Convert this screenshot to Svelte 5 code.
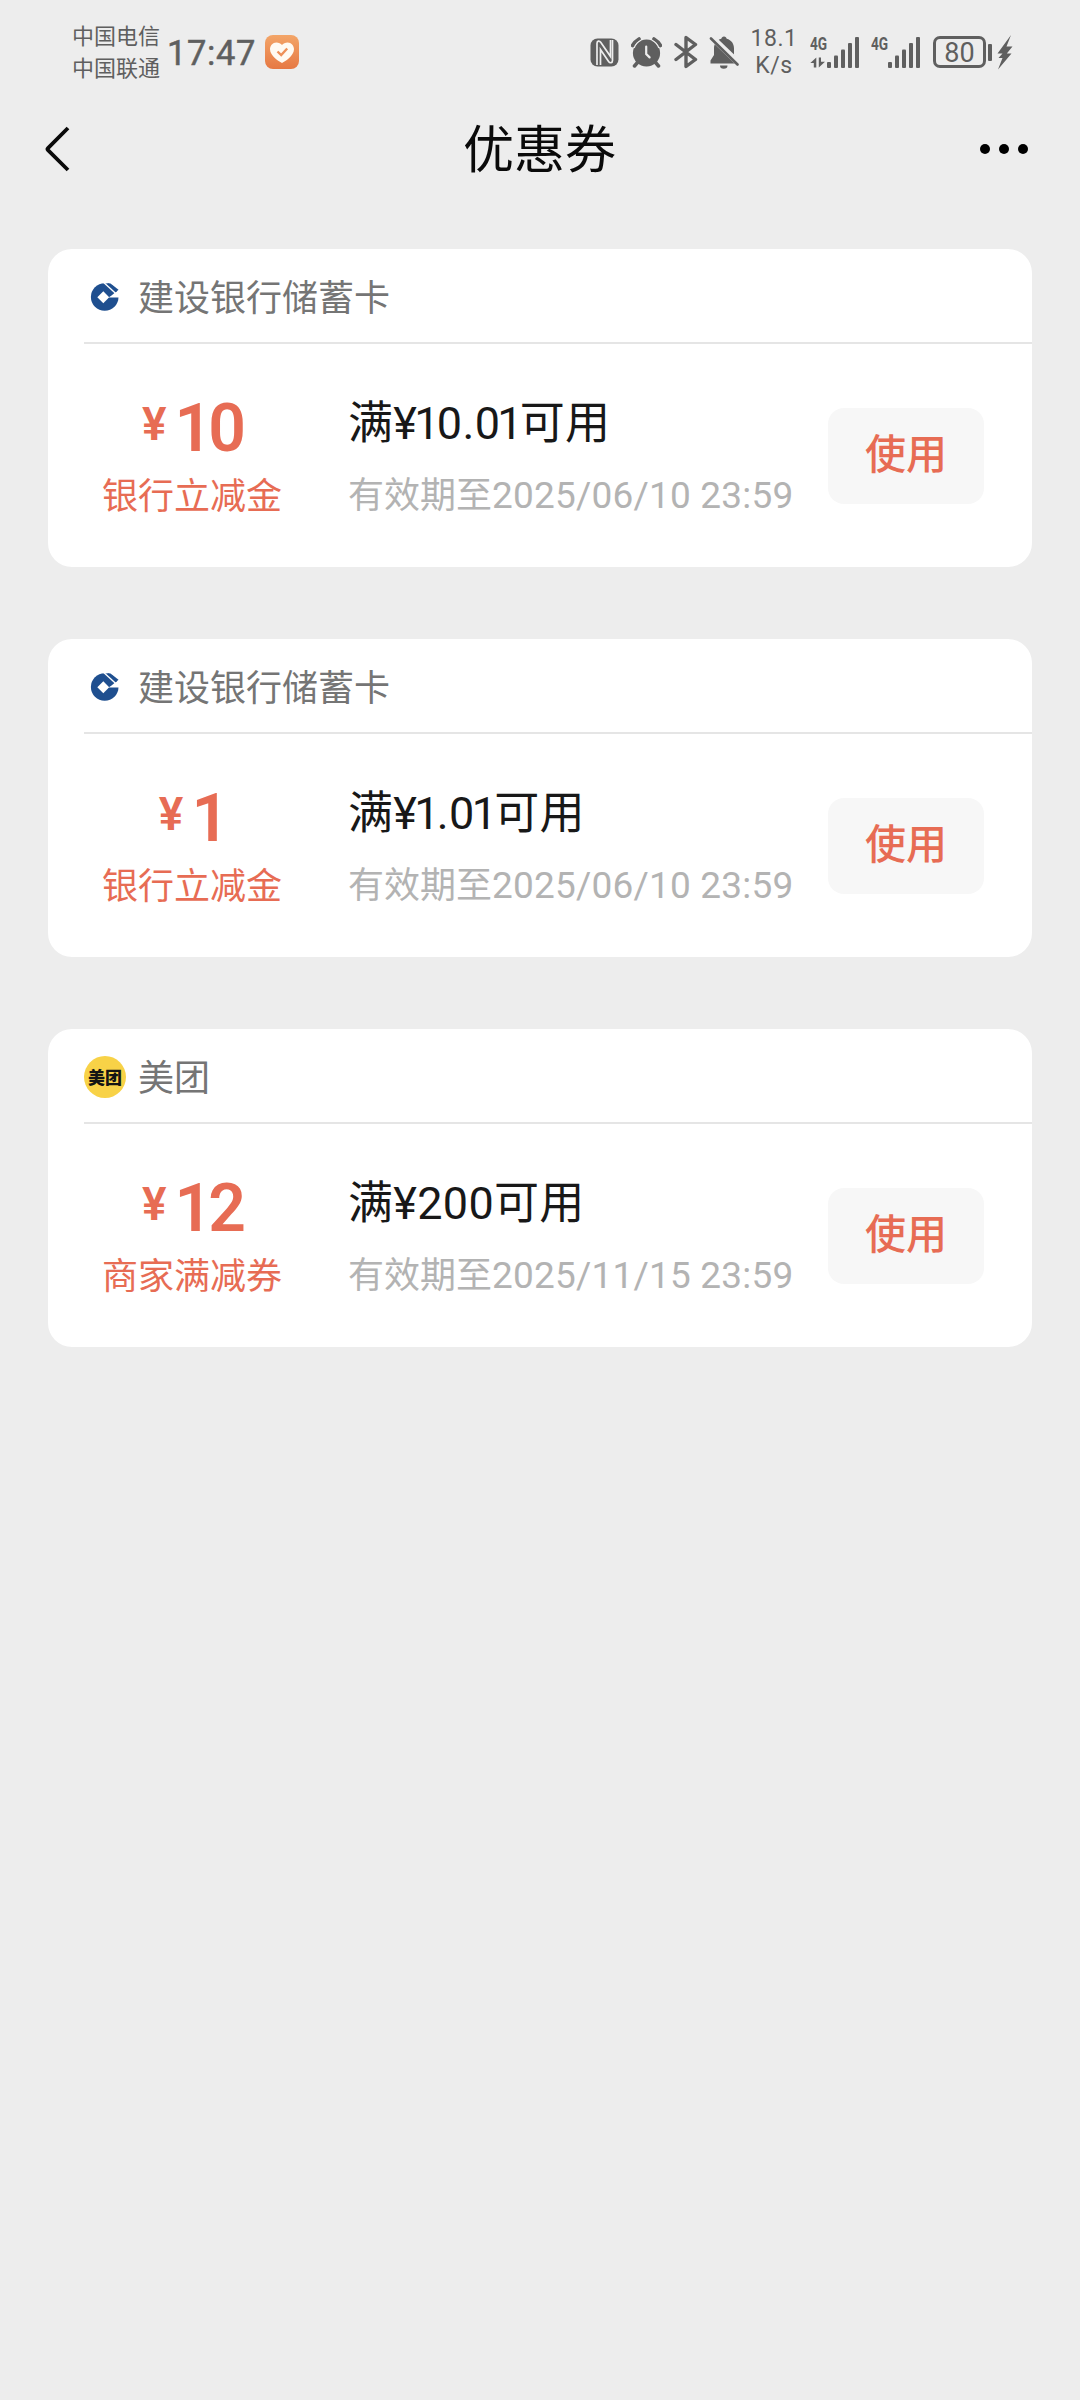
<script lang="ts">
	type Coupon = {
		logo: 'ccb' | 'meituan';
		issuer: string;
		amount: string;
		kind: string;
		limit: string;
		expires: string;
	};

	const coupons: Coupon[] = [
		{ logo: 'ccb', issuer: '建设银行储蓄卡', amount: '10', kind: '银行立减金', limit: '10.01', expires: '2025/06/10 23:59' },
		{ logo: 'ccb', issuer: '建设银行储蓄卡', amount: '1', kind: '银行立减金', limit: '1.01', expires: '2025/06/10 23:59' },
		{ logo: 'meituan', issuer: '美团', amount: '12', kind: '商家满减券', limit: '200', expires: '2025/11/15 23:59' }
	];
</script>

{#snippet bars()}
	<svg class="bars" width="32" height="31" viewBox="0 0 32 31">
		<rect x="0" y="25" width="4" height="6" rx="1" />
		<rect x="7" y="18.5" width="4" height="12.5" rx="1" />
		<rect x="14" y="12.5" width="4" height="18.5" rx="1" />
		<rect x="21" y="6" width="4" height="25" rx="1" />
		<rect x="28" y="0" width="4" height="31" rx="1" />
	</svg>
{/snippet}

<div class="page">
	<header class="status">
		<div class="carriers">
			<span>中国电信</span>
			<span>中国联通</span>
		</div>
		<span class="clock">17:47</span>
		<svg class="health" width="34" height="34" viewBox="0 0 34 34">
			<defs>
				<linearGradient id="health-bg" x1="0" y1="0" x2="0" y2="1">
					<stop offset="0" stop-color="#f3a568" />
					<stop offset="1" stop-color="#e67843" />
				</linearGradient>
			</defs>
			<rect width="34" height="34" rx="8" fill="url(#health-bg)" />
			<path d="M17 28C14.5 27 5 21 5 14.3C5 10.5 7.8 7.5 11.3 7.5C13.7 7.5 15.8 8.5 17 10C18.2 8.5 20.3 7.5 22.7 7.5C26.2 7.5 29 10.5 29 14.3C29 21 19.5 27 17 28Z" fill="#fffaf2" />
			<path d="M12.5 16.5l3.7 3.5l6-6.5" fill="none" stroke="#ee9058" stroke-width="2.4" />
		</svg>

		<div class="tray">
			<svg class="nfc" width="29" height="29" viewBox="0 0 29 29">
				<rect x="0.5" y="0.5" width="28" height="28" rx="7" fill="#5f5f5f" />
				<path d="M7 27V5.5C7 2.8 9.3 2.3 10.7 4.3L20.5 18.5V2" fill="none" stroke="#ededed" stroke-width="1.7" />
				<path d="M10.5 27V11.5L18.6 23.5C20 25.5 22.5 25 22.5 22.5V2" fill="none" stroke="#ededed" stroke-width="1.7" />
			</svg>
			<svg class="alarm" width="31" height="31" viewBox="0 0 31 31">
				<circle cx="15.5" cy="16" r="13.6" />
				<path d="M1.5 8.5A18 18 0 0 1 8 2M23 2A18 18 0 0 1 29.5 8.5" fill="none" stroke="#5f5f5f" stroke-width="3.6" stroke-linecap="round" />
				<path d="M6.5 25.5L3.5 29M24.5 25.5L27.5 29" stroke="#5f5f5f" stroke-width="3.5" stroke-linecap="round" />
				<path d="M15.2 9.5V17l3.4 3.4" fill="none" stroke="#ededed" stroke-width="2.2" stroke-linecap="round" />
				<path d="M3.2 11A14 14 0 0 1 10 3.3M21 3.3A14 14 0 0 1 27.8 11" fill="none" stroke="#ededed" stroke-width="1.2" />
			</svg>
			<svg class="bluetooth" width="24" height="34" viewBox="0 0 24 34">
				<path d="M2 9.5L21.5 24.5L12 31.5V2.5L21.5 9.5L2 24.5" fill="none" stroke="#5f5f5f" stroke-width="3.4" stroke-linejoin="round" stroke-linecap="round" />
			</svg>
			<svg class="bell" width="30" height="33" viewBox="0 0 30 33">
				<path d="M15 0.5c1.5 0 2.5 1 2.7 2.3C22.5 4 25 8 25 12.5V19l3 5.5v3H1.5v-3L5 19v-6.5C5 8 7.5 4 12.3 2.8C12.5 1.5 13.5 0.5 15 0.5Z" />
				<path d="M11 29.5h7.5a3.7 3.2 0 0 1-7.5 0Z" />
				<path d="M1.5 0L30 27.5" stroke="#ededed" stroke-width="6" />
				<path d="M2 2.5L28.5 28.5" stroke="#5f5f5f" stroke-width="2.6" stroke-linecap="round" />
			</svg>
			<div class="speed">
				<span>18.1</span>
				<span>K/s</span>
			</div>
			<div class="signal">
				<div class="net">
					<span>4G</span>
					<svg width="15" height="11" viewBox="0 0 15 11">
						<path d="M6.3 0.5V10.5H3.8V6H0.3ZM8.8 0.5H11V4.8H15L8.8 10.5Z" />
					</svg>
				</div>
				{@render bars()}
			</div>
			<div class="signal second">
				<div class="net"><span>4G</span></div>
				{@render bars()}
			</div>
			<div class="battery">80</div>
			<i class="nub"></i>
			<svg class="bolt" width="16" height="35" viewBox="0 0 16 35">
				<path d="M14 0L0.5 18.5H5.5L1.5 23H5.5L1 34.5L14.5 18.5H9.8L15.5 11.5H9.5Z" />
			</svg>
		</div>
	</header>

	<nav class="nav">
		<button class="icon-btn" aria-label="返回">
			<svg width="26" height="46" viewBox="0 0 26 46">
				<path d="M24 2L4 22.2Q3 23.2 4 24.2L24 44" fill="none" stroke="#0a0a0a" stroke-width="3.8" />
			</svg>
		</button>
		<h1>优惠券</h1>
		<button class="icon-btn more" aria-label="更多">
			<svg width="50" height="12" viewBox="0 0 50 12">
				<circle cx="6" cy="6" r="5" />
				<circle cx="25" cy="6" r="5" />
				<circle cx="44" cy="6" r="5" />
			</svg>
		</button>
	</nav>

	<main class="list">
		{#each coupons as coupon}
			<section class="card">
				<div class="issuer">
					{#if coupon.logo === 'ccb'}
						<svg class="logo" width="42" height="42" viewBox="0 0 42 42">
							<circle cx="20.7" cy="21" r="13.8" fill="#1f4f8f" />
							<path d="M19.3 15.3L25.2 21.3L19.3 27.3L13.3 21.3Z" fill="#fff" />
							<path d="M24.5 21.5H36V14L33 15L27.2 19.7Z" fill="#fff" />
							<path d="M23 7L26.5 7.5L34.5 13.8L31.5 16.5Z" fill="#1f4f8f" />
							<path d="M20 6.8L31.5 17.3" stroke="#fff" stroke-width="1.4" />
						</svg>
					{:else}
						<span class="logo meituan">美团</span>
					{/if}
					<span class="issuer-name">{coupon.issuer}</span>
				</div>
				<div class="body">
					<div class="value">
						<div class="amount"><span class="yen">¥</span><span class="num">{coupon.amount}</span></div>
						<div class="kind">{coupon.kind}</div>
					</div>
					<div class="info">
						<div class="limit">
							满<span class="digits">¥{#each coupon.limit as ch}<span class:one={ch === '1'}>{ch}</span>{/each}</span>可用
						</div>
						<div class="expires">有效期至<span class="digits">{coupon.expires}</span></div>
					</div>
					<button class="use">使用</button>
				</div>
			</section>
		{/each}
	</main>
</div>

<style>
	:global(body) {
		background: #ededed;
	}

	.page {
		min-height: 2400px;
		background: #ededed;
		font-family: 'Noto Sans CJK SC', sans-serif;
		color: #181818;
	}

	button {
		padding: 0;
		border: 0;
		background: none;
		font-family: inherit;
	}

	svg {
		display: block;
		flex-shrink: 0;
	}

	.status {
		display: flex;
		height: 104px;
		box-sizing: border-box;
		padding: 0 67px 0 72px;
		align-items: center;
		color: #5f5f5f;
		fill: #5f5f5f;
		font-family: Roboto, 'Noto Sans CJK SC', sans-serif;
	}

	.carriers {
		display: flex;
		flex-direction: column;
		width: 95px;
		padding-top: 2px;
		font-size: 22px;
		line-height: 32px;
	}

	.clock {
		width: 98px;
		padding-top: 1px;
		font-size: 34.5px;
		letter-spacing: 0.6px;
		line-height: 40px;
		-webkit-text-stroke: 0.5px #5f5f5f;
	}

	.tray {
		display: flex;
		align-items: center;
		margin-left: auto;
	}

	.alarm {
		margin-left: 12px;
	}

	.bluetooth {
		margin-left: 12px;
	}

	.bell {
		margin-left: 11px;
	}

	.speed {
		display: flex;
		flex-direction: column;
		align-items: center;
		width: 50px;
		margin-left: 10px;
		font-size: 23px;
		letter-spacing: 0.6px;
		line-height: 27px;
	}

	.signal {
		display: flex;
		margin-left: 11px;
	}

	.signal.second {
		margin-left: 12px;
	}

	.net {
		display: flex;
		flex-direction: column;
		justify-content: space-between;
		width: 17px;
		height: 31px;
		font-size: 18px;
		font-weight: 700;
		line-height: 14px;
	}

	.net span {
		transform: scaleX(0.76);
		transform-origin: left;
	}

	.battery {
		width: 53px;
		height: 32px;
		box-sizing: border-box;
		margin-left: 13px;
		border: 3px solid #5f5f5f;
		border-radius: 7px;
		font-size: 27px;
		line-height: 28px;
		text-align: center;
	}

	.nub {
		width: 4px;
		height: 17px;
		margin: 0 5px 0 2px;
		border-radius: 1px;
		background: #5f5f5f;
	}

	.nav {
		display: grid;
		grid-template-columns: 1fr auto 1fr;
		height: 90px;
		align-items: center;
		padding: 0 51px 0 44px;
	}

	.more {
		justify-self: end;
	}

	h1 {
		margin: 0 0 7px 6px;
		color: #0a0a0a;
		font-size: 51px;
		font-weight: 400;
		line-height: 70px;
	}

	.list {
		display: flex;
		flex-direction: column;
		gap: 72px;
		padding: 55px 48px 0;
	}

	.card {
		height: 318px;
		border-radius: 24px;
		background: #fff;
	}

	.issuer {
		display: flex;
		height: 95px;
		box-sizing: border-box;
		align-items: center;
		gap: 12px;
		margin-left: 36px;
		padding-top: 2px;
		border-bottom: 2px solid #e5e5e5;
		color: #757575;
		font-size: 36px;
		line-height: 52px;
	}

	.issuer-name {
		padding-bottom: 3px;
	}

	.logo {
		width: 42px;
		height: 42px;
	}

	.meituan {
		border-radius: 50%;
		background: #f8d247;
		color: #141414;
		font-size: 17px;
		font-weight: 900;
		line-height: 42px;
		text-align: center;
	}

	.body {
		display: flex;
		height: 223px;
		align-items: center;
		padding-right: 48px;
	}

	.value {
		width: 288px;
		color: #e76c54;
		text-align: center;
	}

	.amount {
		display: flex;
		justify-content: center;
		height: 74px;
		font-family: Roboto, sans-serif;
		font-weight: 600;
	}

	.yen {
		margin-right: 8px;
		font-size: 46px;
		line-height: 62px;
	}

	.num {
		font-size: 66px;
		letter-spacing: -4px;
		line-height: 72px;
	}

	.kind {
		font-size: 36px;
		line-height: 52px;
	}

	.info {
		flex: 1;
		margin-left: 12px;
		padding-top: 2px;
		white-space: nowrap;
	}

	.digits {
		font-family: Roboto, sans-serif;
	}

	.limit {
		height: 74px;
		font-size: 45px;
		letter-spacing: 0.3px;
		line-height: 57px;
	}

	.limit .one {
		margin: 0 -3px;
	}

	.expires {
		color: #b3b3b3;
		font-size: 36px;
		line-height: 54px;
	}

	.expires .digits {
		font-size: 37px;
		letter-spacing: 0.2px;
	}

	.use {
		width: 156px;
		height: 96px;
		padding-bottom: 9px;
		border-radius: 16px;
		background: #f7f7f7;
		color: #e76c54;
		font-size: 41px;
		font-weight: 500;
		line-height: 86px;
	}
</style>
